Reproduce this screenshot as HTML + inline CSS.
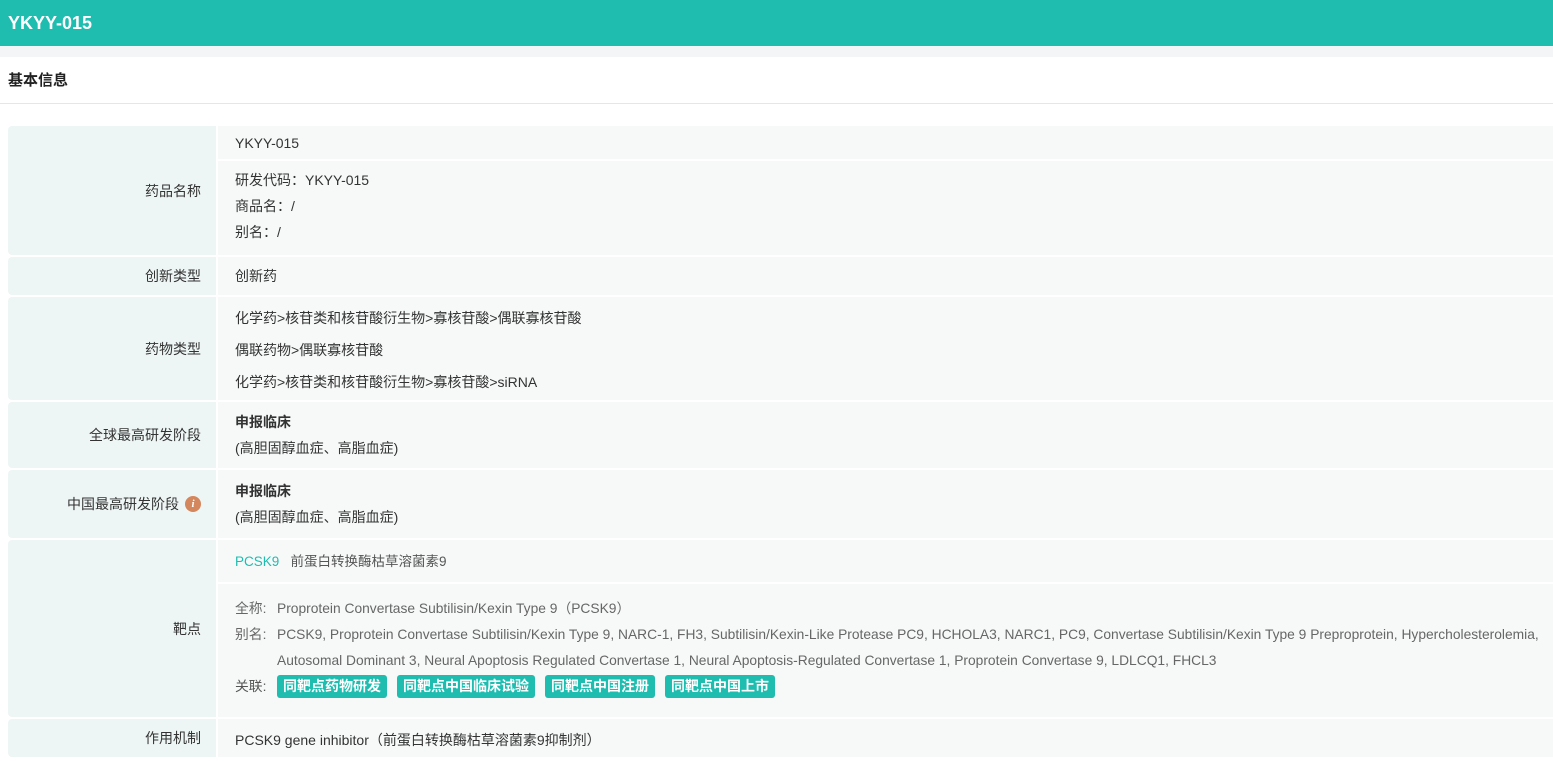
<!DOCTYPE html>
<html><head><meta charset="utf-8"><style>
*{margin:0;padding:0;box-sizing:border-box}
body{width:1553px;height:759px;overflow:hidden;background:#fff;font-family:"Liberation Sans","Noto Sans CJK SC",sans-serif;color:#333;font-size:14px;position:relative}
.a{position:absolute;white-space:nowrap}
.hd{left:0;top:0;width:1553px;height:46px;background:#1fbcb0;color:#fff;font-weight:bold;font-size:18px;line-height:46px;padding-left:8px}
.gs{left:0;top:46px;width:1553px;height:11px;background:#f4f5f7}
.st{left:0;top:57px;width:1553px;height:47px;border-bottom:1px solid #e6e6e6;font-weight:bold;font-size:15px;line-height:48px;padding-left:8px;color:#222}
.l{left:8px;width:208px;background:#eef6f5;border-radius:4px 0 0 4px;text-align:right;padding-right:15px;display:flex;align-items:center;justify-content:flex-end;color:#333}
.c{left:218px;width:1335px;background:#f7f9f9;padding-left:17px}
.g{color:#666;font-size:13.8px}
.lb{display:inline-block;width:42px}
.tag{display:inline-block;background:#1fbcb0;color:#fff;font-weight:bold;border-radius:3px;padding:0 6px;height:23px;line-height:23px;margin-right:10px;font-size:14px}
</style></head><body>
<div class="a hd">YKYY-015</div>
<div class="a gs"></div>
<div class="a st">基本信息</div>

<div class="a l" style="top:126px;height:129px">药品名称</div>
<div class="a c" style="top:126px;height:33px;line-height:35px">YKYY-015</div>
<div class="a c" style="top:161px;height:94px;padding-top:6px;line-height:26px">研发代码：YKYY-015<br>商品名：/<br>别名：/</div>

<div class="a l" style="top:257px;height:38px">创新类型</div>
<div class="a c" style="top:257px;height:38px;line-height:38px">创新药</div>

<div class="a l" style="top:297px;height:103px">药物类型</div>
<div class="a c" style="top:297px;height:103px;padding-top:5px;line-height:32px">化学药&gt;核苷类和核苷酸衍生物&gt;寡核苷酸&gt;偶联寡核苷酸<br>偶联药物&gt;偶联寡核苷酸<br>化学药&gt;核苷类和核苷酸衍生物&gt;寡核苷酸&gt;siRNA</div>

<div class="a l" style="top:402px;height:66px">全球最高研发阶段</div>
<div class="a c" style="top:402px;height:66px;padding-top:7px;line-height:26px"><b>申报临床</b><br>(高胆固醇血症、高脂血症)</div>

<div class="a l" style="top:470px;height:68px">中国最高研发阶段<span style="display:inline-block;width:16px;height:16px;border-radius:50%;background:#d4865c;color:#fff;font-size:11px;font-style:italic;font-weight:bold;line-height:16px;text-align:center;margin-left:6px;font-family:'Liberation Serif',serif">i</span></div>
<div class="a c" style="top:470px;height:68px;padding-top:8px;line-height:26px"><b>申报临床</b><br>(高胆固醇血症、高脂血症)</div>

<div class="a l" style="top:540px;height:177px">靶点</div>
<div class="a c" style="top:540px;height:42px;line-height:44px;font-size:13.5px"><span style="color:#1fbcb0">PCSK9</span>&nbsp;&nbsp;&nbsp;<span style="color:#555">前蛋白转换酶枯草溶菌素9</span></div>
<div class="a c g" style="top:584px;height:133px;padding-top:12px;line-height:26px">
<div><span class="lb">全称:</span>Proprotein Convertase Subtilisin/Kexin Type 9（PCSK9）</div>
<div><span class="lb">别名:</span>PCSK9, Proprotein Convertase Subtilisin/Kexin Type 9, NARC-1, FH3, Subtilisin/Kexin-Like Protease PC9, HCHOLA3, NARC1, PC9, Convertase Subtilisin/Kexin Type 9 Preproprotein, Hypercholesterolemia,</div>
<div style="padding-left:42px">Autosomal Dominant 3, Neural Apoptosis Regulated Convertase 1, Neural Apoptosis-Regulated Convertase 1, Proprotein Convertase 9, LDLCQ1, FHCL3</div>
<div style="color:#555"><span class="lb">关联:</span><span class="tag">同靶点药物研发</span><span class="tag">同靶点中国临床试验</span><span class="tag">同靶点中国注册</span><span class="tag">同靶点中国上市</span></div>
</div>

<div class="a l" style="top:719px;height:38px">作用机制</div>
<div class="a c" style="top:719px;height:38px;line-height:42px">PCSK9 gene inhibitor（前蛋白转换酶枯草溶菌素9抑制剂）</div>
</body></html>
